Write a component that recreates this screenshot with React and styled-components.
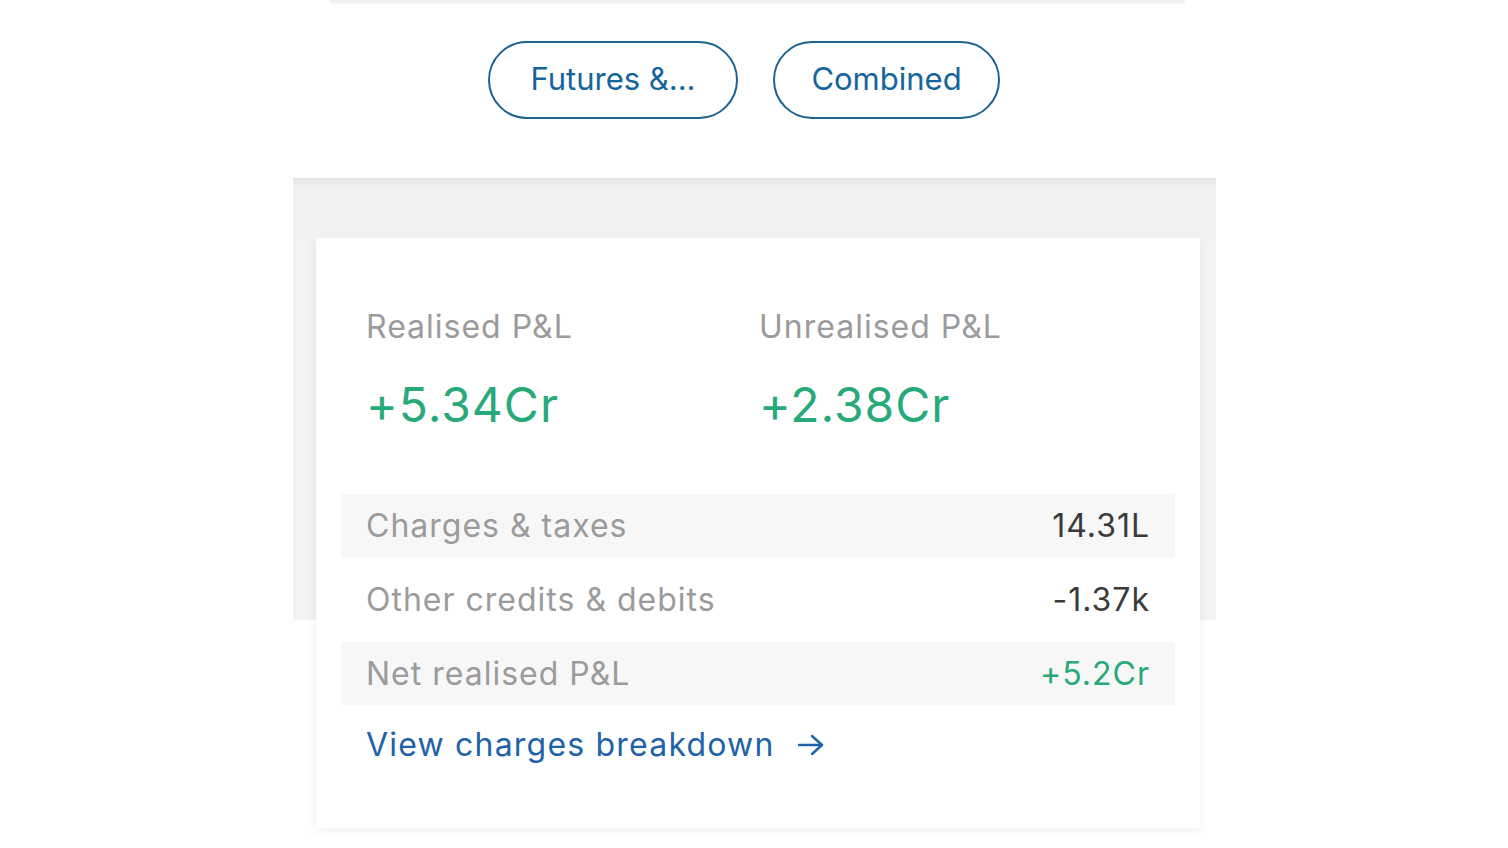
import styled, { createGlobalStyle } from "styled-components";

const GlobalStyle = createGlobalStyle`
    body {
        margin: 0;
        background: #ffffff;
        font-family: Inter, "Liberation Sans", sans-serif;
    }
`

export default function App() {
    const rows = [
        { label: "Charges & taxes", value: "14.31L", shaded: true },
        { label: "Other credits & debits", value: "-1.37k" },
        { label: "Net realised P&L", value: "+5.2Cr", shaded: true, positive: true },
    ];

    return (
        <Page>
            <GlobalStyle />
            <TopCardEdge />
            <Tabs>
                <Pill width="250px">Futures &...</Pill>
                <Pill width="227px">Combined</Pill>
            </Tabs>
            <Section>
                <Card>
                    <Summary>
                        <Stat>
                            <Label>Realised P&amp;L</Label>
                            <Amount>+5.34Cr</Amount>
                        </Stat>
                        <Stat>
                            <Label>Unrealised P&amp;L</Label>
                            <Amount>+2.38Cr</Amount>
                        </Stat>
                    </Summary>
                    <Rows>
                        {rows.map(r => (
                            <Row key={r.label} shaded={r.shaded}>
                                <RowLabel>{r.label}</RowLabel>
                                <RowValue positive={r.positive}>{r.value}</RowValue>
                            </Row>
                        ))}
                    </Rows>
                    <BreakdownLink href="#">
                        View charges breakdown
                        <svg width="28" height="24" viewBox="0 0 28 24" fill="none" stroke="currentColor" strokeWidth="2.4" strokeLinecap="round" strokeLinejoin="round">
                            <path d="M2 12h23" />
                            <path d="M15 3l10 9-10 9" />
                        </svg>
                    </BreakdownLink>
                </Card>
            </Section>
        </Page>
    )
}

const Page = styled.div`
    width: 1508px;
    height: 848px;
    overflow: hidden;
    display: flex;
    flex-direction: column;
    align-items: center;
`

const TopCardEdge = styled.div`
    width: 855px;
    height: 3px;
    margin-left: 6px;
    background: #f0f0f0;
    border-radius: 0 0 14px 14px;
    box-shadow: 0 1px 2px rgba(0,0,0,0.04);
`

const Tabs = styled.div`
    display: flex;
    gap: 35px;
    margin-top: 38px;
    margin-right: 20px;
`

const Pill = styled.button`
    width: ${({ width }) => width};
    height: 78px;
    box-sizing: border-box;
    border: 2px solid #1d6391;
    border-radius: 40px;
    background: #ffffff;
    color: #15659c;
    font-family: Inter, "Liberation Sans", sans-serif;
    font-size: 31px;
    font-weight: 400;
    padding: 0 0 3px 0;
    cursor: pointer;
`

const Section = styled.div`
    width: 923px;
    height: 442px;
    margin-top: 59px;
    margin-left: 1px;
    background: linear-gradient(to bottom, #e6e6e6 0px, #f1f1f1 10px, #f3f3f3 60px, #f3f3f3 100%);
    display: flex;
    justify-content: center;
    padding-top: 60px;
    box-sizing: border-box;
`

const Card = styled.div`
    width: 884px;
    height: 590px;
    margin-left: 7px;
    flex-shrink: 0;
    background: #ffffff;
    box-shadow: 0 2px 10px rgba(0,0,0,0.07);
    padding: 25px 25px 0 25px;
    box-sizing: border-box;
    display: flex;
    flex-direction: column;
`

const Summary = styled.div`
    display: grid;
    grid-template-columns: 393px 1fr;
    padding: 0 25px;
    margin-top: 45px;
`

const Stat = styled.div`
    display: flex;
    flex-direction: column;
`

const Label = styled.div`
    font-size: 32px;
    line-height: 38px;
    letter-spacing: 1px;
    color: #9b9b9b;
`

const Amount = styled.div`
    margin-top: 31px;
    font-size: 48px;
    line-height: 56px;
    letter-spacing: 1px;
    color: #27a97a;
`

const Rows = styled.div`
    display: flex;
    flex-direction: column;
    gap: 11px;
    margin-top: 61px;
`

const Row = styled.div`
    height: 63px;
    display: flex;
    align-items: center;
    justify-content: space-between;
    padding: 0 25px;
    background: ${({ shaded }) => shaded ? "#f7f7f8" : "transparent"};
`

const RowLabel = styled.span`
    font-size: 32px;
    letter-spacing: 1px;
    color: #9b9b9b;
`

const RowValue = styled.span`
    font-size: 32px;
    letter-spacing: 1px;
    color: ${({ positive }) => positive ? "#27a97a" : "#3a3a3a"};
`

const BreakdownLink = styled.a`
    display: flex;
    align-items: center;
    gap: 22px;
    margin-top: 18px;
    padding: 0 25px;
    font-size: 32px;
    line-height: 44px;
    letter-spacing: 1.2px;
    color: #1f62a8;
    text-decoration: none;
`
